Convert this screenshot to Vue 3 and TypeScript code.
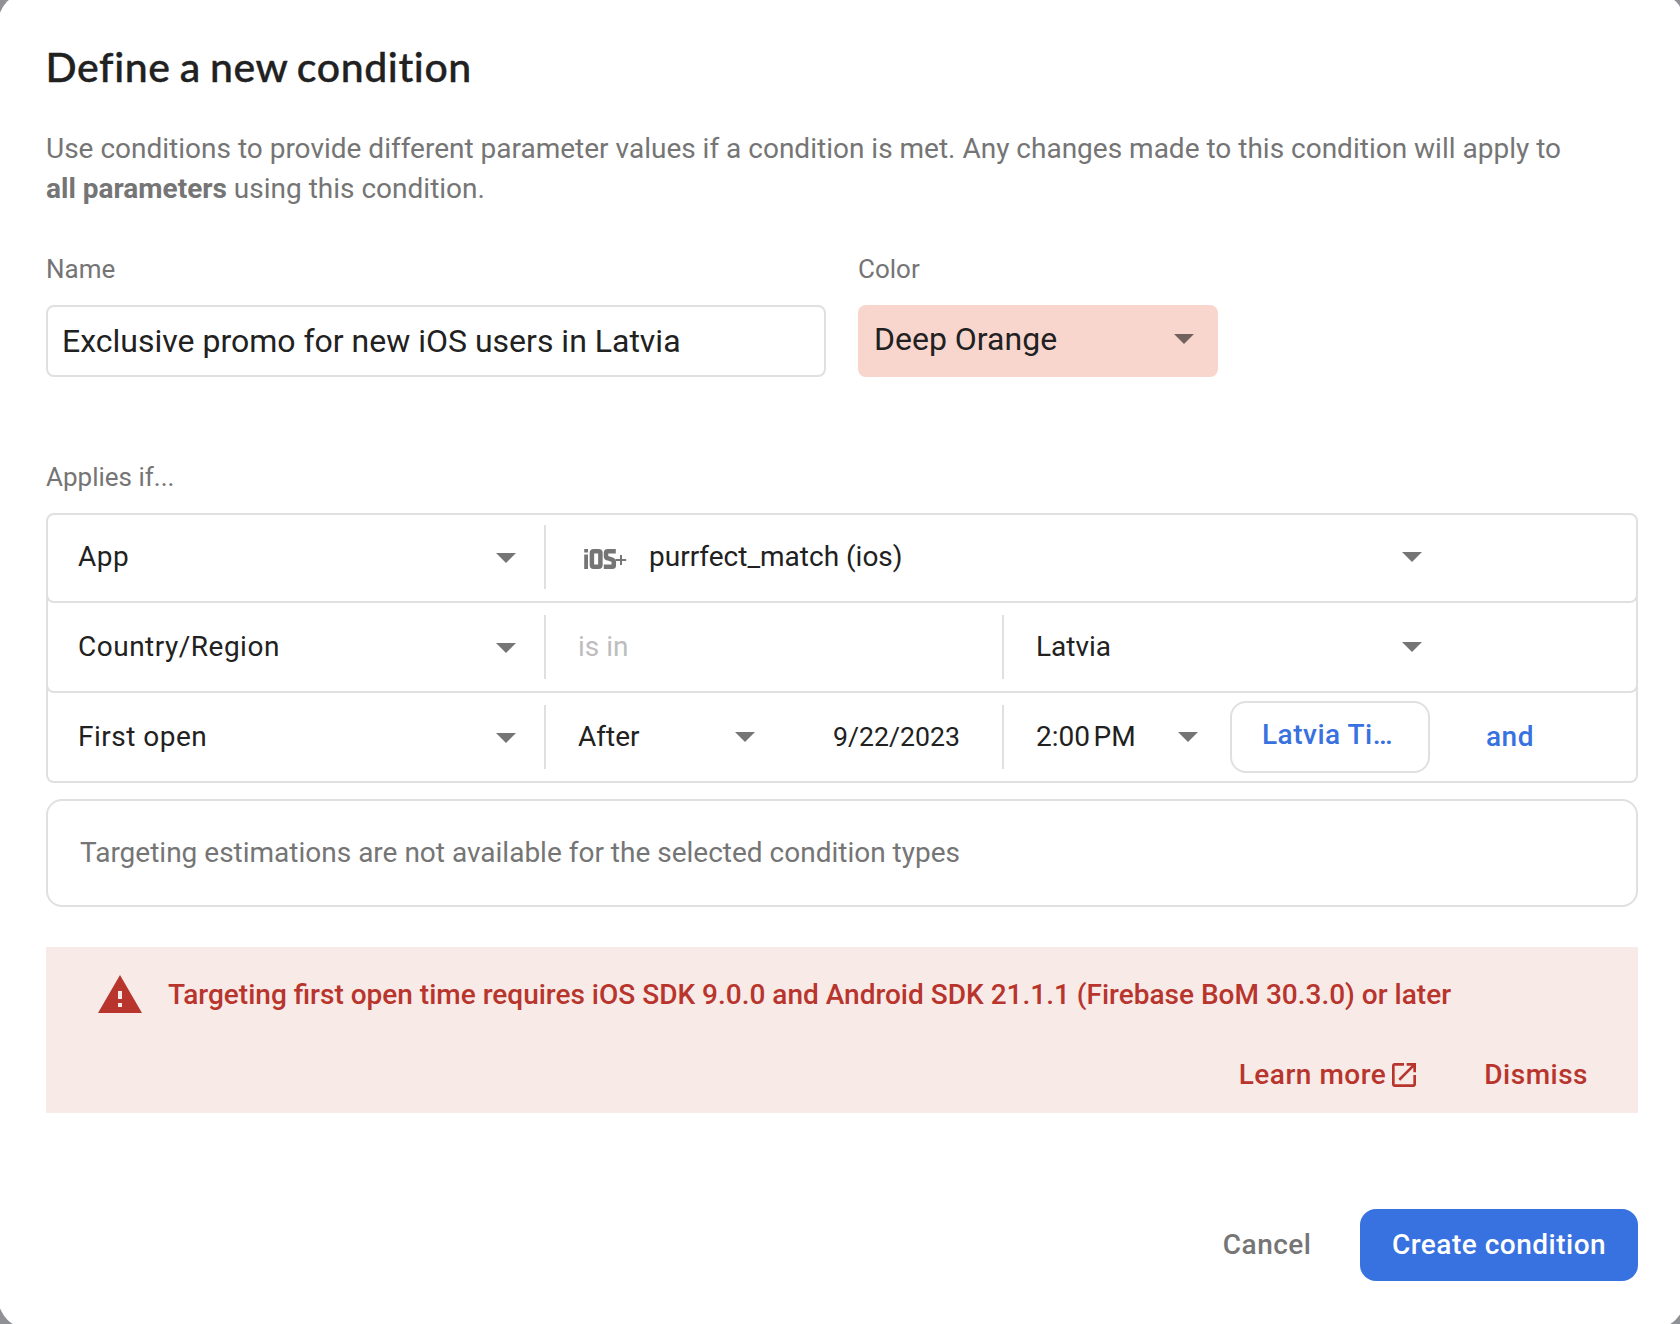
<script setup lang="ts">
import { ref } from 'vue'

const name = ref('Exclusive promo for new iOS users in Latvia')
const color = ref('Deep Orange')
</script>

<template>
  <div class="backdrop">
    <section class="dialog" role="dialog" aria-labelledby="title">
      <h1 id="title" class="title">Define a new condition</h1>
      <div class="intro">
        <div>Use conditions to provide different parameter values if a condition is met. Any changes made to this condition will apply to</div>
        <div><b>all parameters</b> using this condition.</div>
      </div>

      <div class="fields">
        <div class="field field-name">
          <span class="label">Name</span>
          <div class="input">{{ name }}</div>
        </div>
        <div class="field field-color">
          <span class="label">Color</span>
          <div class="color-select">
            <span>{{ color }}</span>
            <i class="caret"></i>
          </div>
        </div>
      </div>

      <span class="label applies">Applies if...</span>
      <div class="rules">
        <div class="rule">
          <div class="kind"><span class="txt">App</span><i class="caret"></i></div>
          <i class="divider"></i>
          <div class="wide">
            <svg class="ios" width="48" height="24" viewBox="0 0 48 24" fill="none" stroke="#757575">
              <path d="M6.1 2v3.6M6.1 7.4V22" stroke-width="3.8" />
              <rect x="11.9" y="4.2" width="8.5" height="15.6" rx="1.8" stroke-width="4.5" />
              <path d="M35.8 4.2h-8.2q-1.6 0-1.6 1.6v3.2q0 1.9 1.6 2.2l4.4 1.4q1.8.6 1.8 2.4v3.2q0 1.6-1.6 1.6H23.8" stroke-width="4.5" />
              <path d="M35.5 13H46.2M41 8v10" stroke-width="2" />
            </svg>
            <span class="txt">purrfect_match (ios)</span>
            <i class="caret end"></i>
          </div>
        </div>

        <div class="rule">
          <div class="kind"><span class="txt">Country/Region</span><i class="caret"></i></div>
          <i class="divider"></i>
          <div class="operator"><span class="txt muted">is in</span></div>
          <i class="divider"></i>
          <div class="value"><span class="txt">Latvia</span><i class="caret end"></i></div>
        </div>

        <div class="rule">
          <div class="kind"><span class="txt">First open</span><i class="caret"></i></div>
          <i class="divider"></i>
          <div class="operator">
            <div class="when"><span class="txt">After</span><i class="caret end"></i></div>
            <span class="date">9/22/2023</span>
          </div>
          <i class="divider"></i>
          <div class="time"><span class="txt">2:00&#8239;PM</span><i class="caret end"></i></div>
          <button class="zone"><span>Latvia Ti…</span></button>
          <a class="txt and">and</a>
        </div>
      </div>

      <div class="estimate"><span class="txt">Targeting estimations are not available for the selected condition types</span></div>

      <div class="alert">
        <div class="alert-message">
          <svg width="48" height="48" viewBox="0 0 24 24" fill="#b7352d">
            <path d="M1 21h22L12 2 1 21zm12-3h-2v-2h2v2zm0-4h-2v-4h2v4z" />
          </svg>
          <span class="txt">Targeting first open time requires iOS SDK 9.0.0 and Android SDK 21.1.1 (Firebase BoM 30.3.0) or later</span>
        </div>
        <div class="alert-actions">
          <a class="learn">
            <span>Learn more</span>
            <svg width="32" height="32" viewBox="0 0 24 24" fill="#b7352d">
              <path d="M19 19H5V5h7V3H5c-1.11 0-2 .9-2 2v14c0 1.1.89 2 2 2h14c1.1 0 2-.9 2-2v-7h-2v7zM14 3v2h3.59l-9.83 9.83 1.41 1.41L19 6.41V10h2V3h-7z" />
            </svg>
          </a>
          <a>Dismiss</a>
        </div>
      </div>

      <footer class="footer">
        <button class="cancel"><span class="txt">Cancel</span></button>
        <button class="create"><span class="txt">Create condition</span></button>
      </footer>
    </section>
  </div>
</template>

<style>
body {
  background: #909196;
}
</style>

<style scoped>
* {
  box-sizing: border-box;
}

.backdrop {
  width: 1680px;
  height: 1324px;
  overflow: hidden;
  background: #909196;
  font: 28px/33px Roboto, sans-serif;
  color: #212121;
}

.dialog {
  width: 1687px;
  height: 1337px;
  margin: -8px 0 0 -2px;
  padding: 51px 47px 0 48px;
  border-radius: 32px;
  background: #fff;
}

.title {
  margin: 0 0 38px -0.5px;
  font: 500 41px/48px Lato, sans-serif;
  letter-spacing: 0.6px;
  word-spacing: -1.8px;
  -webkit-text-stroke: 0.4px #212121;
}

.intro {
  height: 80px;
  line-height: 40px;
  white-space: nowrap;
  color: #757575;
}

.fields {
  display: flex;
  gap: 32px;
  margin-top: 45px;
}

.field-name {
  width: 780px;
}

.field-color {
  width: 360px;
}

.label {
  display: block;
  font-size: 26px;
  line-height: 30px;
  color: #757575;
}

.input,
.color-select {
  display: flex;
  align-items: center;
  height: 72px;
  margin-top: 21px;
  border-radius: 8px;
  font-size: 32px;
  line-height: 38px;
}

.input {
  padding: 0 14px;
  border: 2px solid #e0e0e0;
}

.color-select {
  justify-content: space-between;
  padding: 0 24px 4px 16px;
  background: #f8d6ce;
}

.caret {
  width: 0;
  height: 0;
  flex: none;
  border: 10px solid transparent;
  border-top-color: rgba(0, 0, 0, 0.54);
  border-bottom: 0;
}

.caret.end {
  margin-left: auto;
}

.applies {
  margin: 85px 0 21px;
}

.rules {
  width: 1592px;
}

.rule {
  display: flex;
  align-items: center;
  height: 98px;
  margin-top: -8px;
  padding-top: 8px;
  border: 2px solid #e0e0e0;
  border-top: 0;
  border-radius: 0 0 8px 8px;
}

.rule:first-child {
  height: 90px;
  margin-top: 0;
  padding: 0 0 2px;
  border-top: 2px solid #e0e0e0;
  border-radius: 8px;
}

.rule > div,
.when {
  display: flex;
  align-items: center;
}

.kind {
  width: 496px;
  justify-content: space-between;
  padding: 0 28px 0 30px;
  letter-spacing: 0.5px;
}

.kind .caret {
  margin-top: 2px;
}

.txt {
  margin-bottom: 1px;
  white-space: nowrap;
}

.divider {
  flex: none;
  width: 2px;
  height: 64px;
  background: #e0e0e0;
}

.wide {
  width: 876px;
  padding-left: 34px;
  gap: 21px;
}

.ios {
  margin-top: 4px;
}

.operator {
  width: 456px;
  padding-left: 32px;
}

.muted {
  color: #bdbdbd;
}

.value {
  width: 418px;
  padding-left: 32px;
}

.when {
  width: 177px;
}

.date {
  margin-left: 78px;
  font-size: 26.67px;
  line-height: 32px;
}

.time {
  width: 194px;
  padding-left: 32px;
}

button {
  padding: 0;
  border: 0;
  background: none;
  font: 500 28px/33px Roboto, sans-serif;
  letter-spacing: 0.5px;
  display: flex;
  align-items: center;
  justify-content: center;
}

.zone {
  width: 200px;
  height: 72px;
  margin-left: 32px;
  padding: 0 0 5px 30px;
  justify-content: flex-start;
  border: 2px solid #e0e0e0;
  border-radius: 16px;
  color: #3871e0;
}

.and {
  margin-left: 56px;
  font-weight: 500;
  letter-spacing: 0.5px;
  color: #3871e0;
}

.estimate {
  display: flex;
  align-items: center;
  width: 1592px;
  height: 108px;
  margin-top: 16px;
  padding-left: 32px;
  border: 2px solid #e0e0e0;
  border-radius: 16px;
  color: #757575;
}

.alert {
  width: 1592px;
  height: 166px;
  margin-top: 40px;
  padding: 24px 50px 0;
  background: #f8eae7;
  color: #b7352d;
  font-weight: 500;
}

.alert-message {
  display: flex;
  align-items: center;
  gap: 24px;
}

.alert-actions {
  display: flex;
  justify-content: flex-end;
  gap: 64px;
  margin-top: 39px;
  letter-spacing: 0.5px;
}

.learn {
  display: flex;
  gap: 2px;
}

.learn svg {
  margin-top: 1px;
}

.footer {
  display: flex;
  justify-content: flex-end;
  margin-top: 96px;
}

.cancel {
  margin-right: 48.5px;
  color: #757575;
}

.create {
  width: 278px;
  height: 72px;
  border-radius: 16px;
  background: #3871e0;
  color: #fff;
}
</style>
